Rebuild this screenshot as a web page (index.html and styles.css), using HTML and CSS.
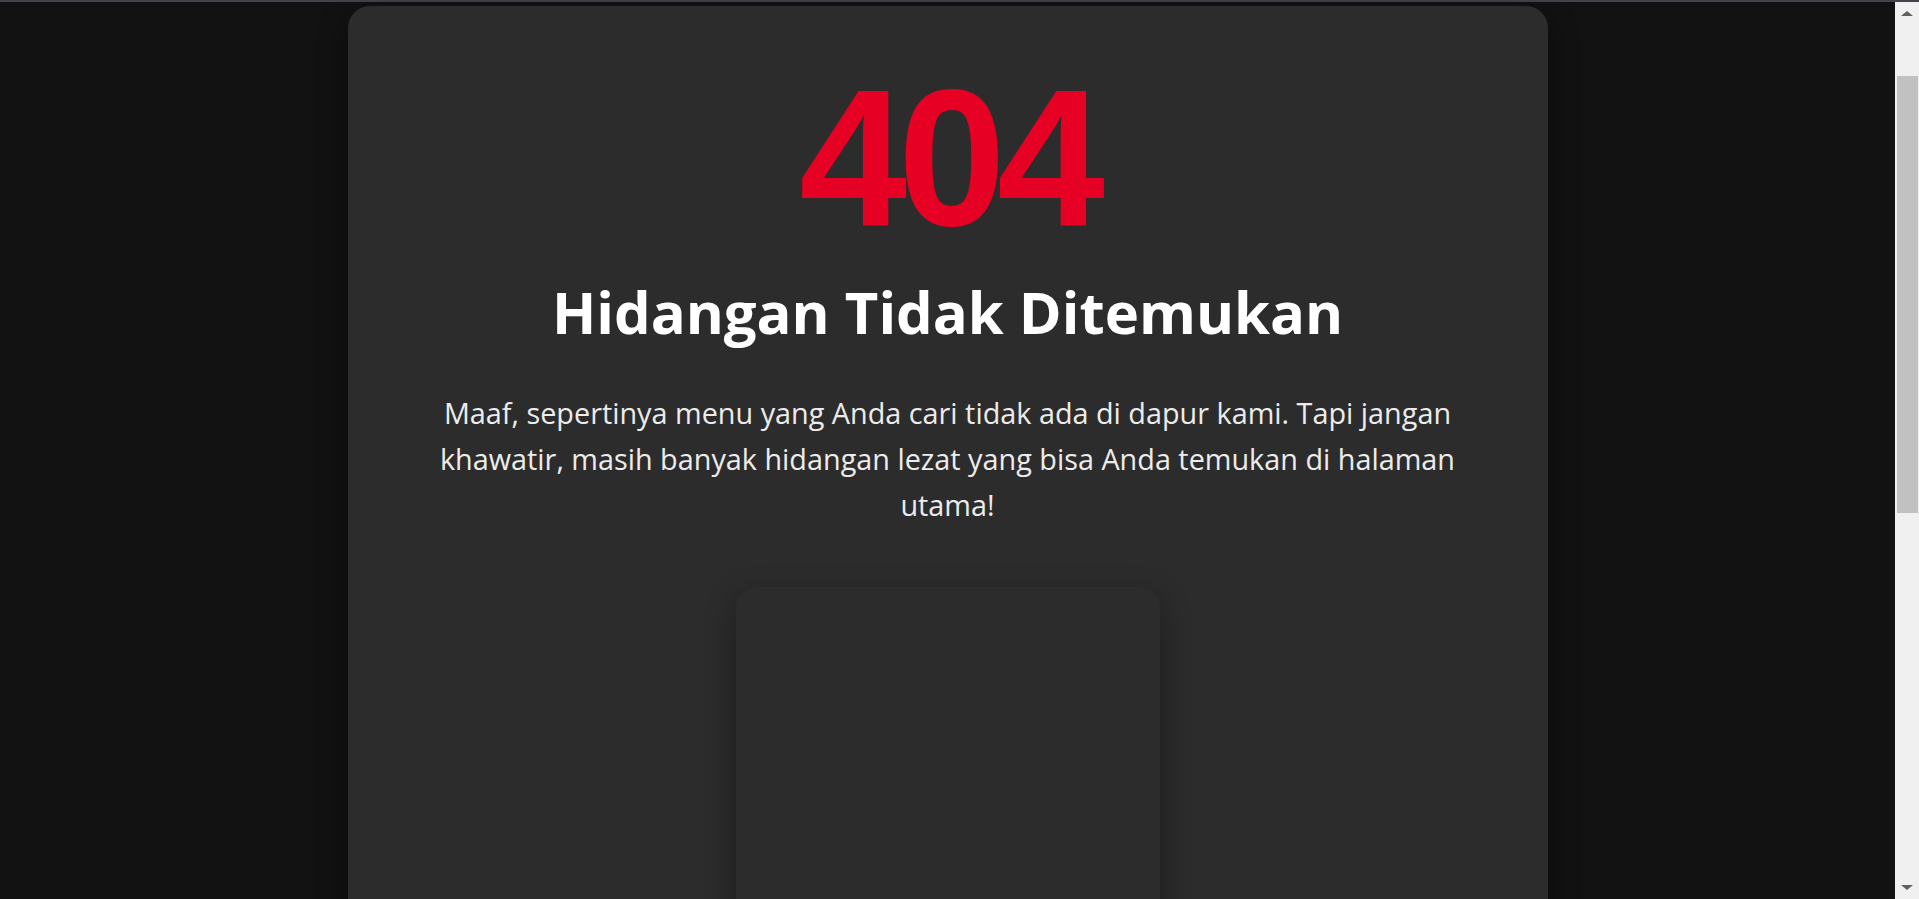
FILE: index.html
```html
<!DOCTYPE html>
<html lang="id">
<head>
<meta charset="utf-8">
<title>404 - Hidangan Tidak Ditemukan</title>
<link rel="stylesheet" href="styles.css">
</head>
<body>
<div class="topline"></div>
<main class="page">
  <section class="card">
    <div class="code">404</div>
    <h1 class="title">Hidangan Tidak Ditemukan</h1>
    <p class="message">Maaf, sepertinya menu yang Anda cari tidak ada di dapur kami. Tapi jangan khawatir, masih banyak hidangan lezat yang bisa Anda temukan di halaman utama!</p>
    <div class="illustration"></div>
  </section>
</main>
<div class="scrollbar" aria-hidden="true">
  <span class="arrow arrow-up"></span>
  <span class="track"><span class="thumb"></span></span>
  <span class="arrow arrow-down"></span>
</div>
</body>
</html>
```
FILE: styles.css
```css
html, body {
  margin: 0;
  padding: 0;
}
body {
  background: #121212;
  font-family: "Open Sans", "Noto Sans", sans-serif;
}
.topline {
  height: 2px;
  background: #48414c;
}
.page {
  display: flex;
  justify-content: center;
  padding: 4px 24px 6px 0;
}
.card {
  width: 1200px;
  box-sizing: border-box;
  background: #2c2c2c;
  border-radius: 22px;
  padding: 56px 60px 60px;
  text-align: center;
  box-shadow: 0 10px 30px rgba(0, 0, 0, 0.45);
  display: flex;
  flex-direction: column;
  align-items: center;
}
.code {
  font-family: "Liberation Sans", Arial, sans-serif;
  font-weight: 700;
  font-size: 194px;
  line-height: 1;
  letter-spacing: -9px;
  color: #e60023;
  margin-top: -1px;
}
.title {
  margin: 22px 0 0;
  font-size: 58px;
  line-height: 1.2;
  font-weight: 700;
  color: #ffffff;
}
.message {
  margin: 43px 0 0;
  font-size: 28.8px;
  line-height: 1.6;
  color: #ececec;
}
.illustration {
  margin-top: 59px;
  width: 424px;
  height: 1115px;
  background: #2c2c2c;
  border-radius: 20px;
  box-shadow: 0 10px 30px rgba(0, 0, 0, 0.35);
}

/* browser scrollbar, as seen in the capture */
.scrollbar {
  position: fixed;
  top: 2px;
  right: 0;
  bottom: 0;
  width: 24px;
  background: #f0f0f0;
  display: flex;
  flex-direction: column;
  align-items: center;
}
.arrow {
  width: 0;
  height: 0;
  border-left: 6px solid transparent;
  border-right: 6px solid transparent;
  flex: none;
}
.arrow-up {
  margin-top: 9px;
  border-bottom: 5px solid #606060;
}
.arrow-down {
  margin-bottom: 9px;
  border-top: 5px solid #606060;
}
.track {
  flex: 1;
  width: 100%;
  display: flex;
  flex-direction: column;
  align-items: flex-end;
}
.thumb {
  margin-top: 60px;
  margin-right: 1px;
  width: 21px;
  height: 437px;
  background: #c1c1c1;
}
```
